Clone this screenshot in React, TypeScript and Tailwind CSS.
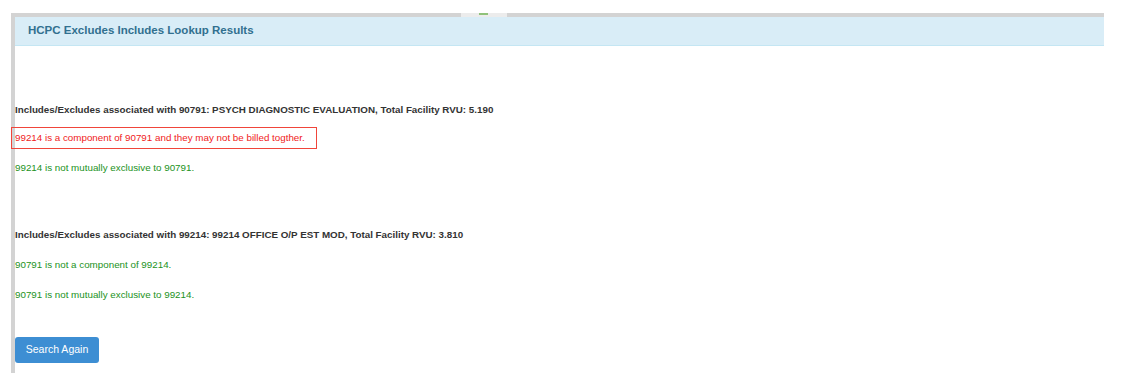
const Line = ({ children, className }: { children: React.ReactNode; className: string }) => (
  <p className={`text-[9.8px] leading-[12px] ${className}`}>{children}</p>
);

const App = () => {
  return (
    <div className="w-[1122px] h-[380px] bg-white pt-[13px] pl-[11px] pr-[18px] font-['Liberation_Sans',Arial,sans-serif] overflow-hidden">
      <div className="relative border-t-[4px] border-l-[4px] border-[#d3d3d3] h-[360px]">
        {/* little tab break in the top bar */}
        <div className="absolute -top-[4px] left-[446px] w-[46px] h-[4px] bg-[#ececec]">
          <div className="ml-[18px] w-[9px] h-[2px] bg-[#8fc27a]" />
        </div>

        <div className="h-[29px] bg-[#d9edf7] border-b border-[#c4e6f3] flex items-center pl-[13px]">
          <h3 className="text-[11.5px] font-bold text-[#31708f]">HCPC Excludes Includes Lookup Results</h3>
        </div>

        <div className="pt-[58px]">
          <Line className="font-bold text-[#333]">
            Includes/Excludes associated with 90791: PSYCH DIAGNOSTIC EVALUATION, Total Facility RVU: 5.190
          </Line>

          <div className="mt-[11px] -ml-[4px] w-[306px] h-[22px] border border-[#f0453a] flex items-center pl-[3px]">
            <Line className="text-[#f01a1a]">99214 is a component of 90791 and they may not be billed togther.</Line>
          </div>

          <Line className="mt-[13px] text-[#229222]">99214 is not mutually exclusive to 90791.</Line>

          <Line className="mt-[55px] font-bold text-[#333]">
            Includes/Excludes associated with 99214: 99214 OFFICE O/P EST MOD, Total Facility RVU: 3.810
          </Line>

          <Line className="mt-[18px] text-[#229222]">90791 is not a component of 99214.</Line>

          <Line className="mt-[18px] text-[#229222]">90791 is not mutually exclusive to 99214.</Line>

          <button className="mt-[36px] h-[26px] w-[84px] rounded-[3px] bg-[#3d8ed3] text-white text-[10.5px]">
            Search Again
          </button>
        </div>
      </div>
    </div>
  );
};

export default App;
